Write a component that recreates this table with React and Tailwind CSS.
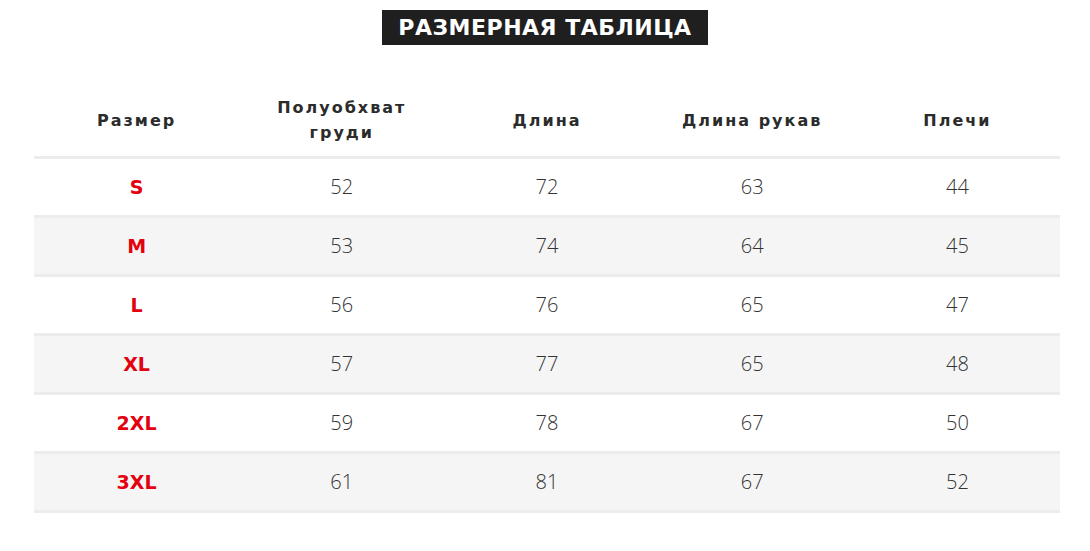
const HEADERS = ['Размер', ['Полуобхват', 'груди'], 'Длина', 'Длина рукав', 'Плечи'];

const ROWS = [
  ['S', 52, 72, 63, 44],
  ['M', 53, 74, 64, 45],
  ['L', 56, 76, 65, 47],
  ['XL', 57, 77, 65, 48],
  ['2XL', 59, 78, 67, 50],
  ['3XL', 61, 81, 67, 52],
];

export default function App() {
  return (
    <div className="w-[1090px] h-[551px] bg-white font-['Open_Sans',sans-serif] text-[#222]">
      {/* title */}
      <div className="flex justify-center pt-[10px]">
        <h2 className="bg-[#1f1f1f] text-white font-['DejaVu_Sans',sans-serif] font-bold text-[22px] leading-[35px] h-[35px] w-[326px] text-center tracking-[0.5px]">
          РАЗМЕРНАЯ ТАБЛИЦА
        </h2>
      </div>

      <div className="ml-[34px] w-[1026px] mt-[43px]">
        {/* header row */}
        <div className="grid grid-cols-5 h-[71px] pb-[4px] items-center border-b-[3px] border-[#ececec]">
          {HEADERS.map((h, i) => (
            <div
              key={i}
              className="text-center whitespace-nowrap font-['DejaVu_Sans',sans-serif] font-bold text-[16px] leading-[25px] tracking-[2px] text-[#2b2b2b]"
            >
              {Array.isArray(h) ? (
                <>
                  {h[0]}
                  <br />
                  {h[1]}
                </>
              ) : (
                h
              )}
            </div>
          ))}
        </div>

        {ROWS.map((r, i) => (
          <div
            key={r[0]}
            className={`grid grid-cols-5 h-[59px] items-center border-b-[3px] border-[#ececec] ${i % 2 === 1 ? 'bg-[#f5f5f5]' : 'bg-white'}`}
          >
            <div className="text-center font-['DejaVu_Sans',sans-serif] font-bold text-[19px] text-[#e3000f]">{r[0]}</div>
            {r.slice(1).map((v, j) => (
              <div key={j} className="text-center font-light text-[20px] text-[#333]">
                {v}
              </div>
            ))}
          </div>
        ))}
      </div>
    </div>
  );
}
